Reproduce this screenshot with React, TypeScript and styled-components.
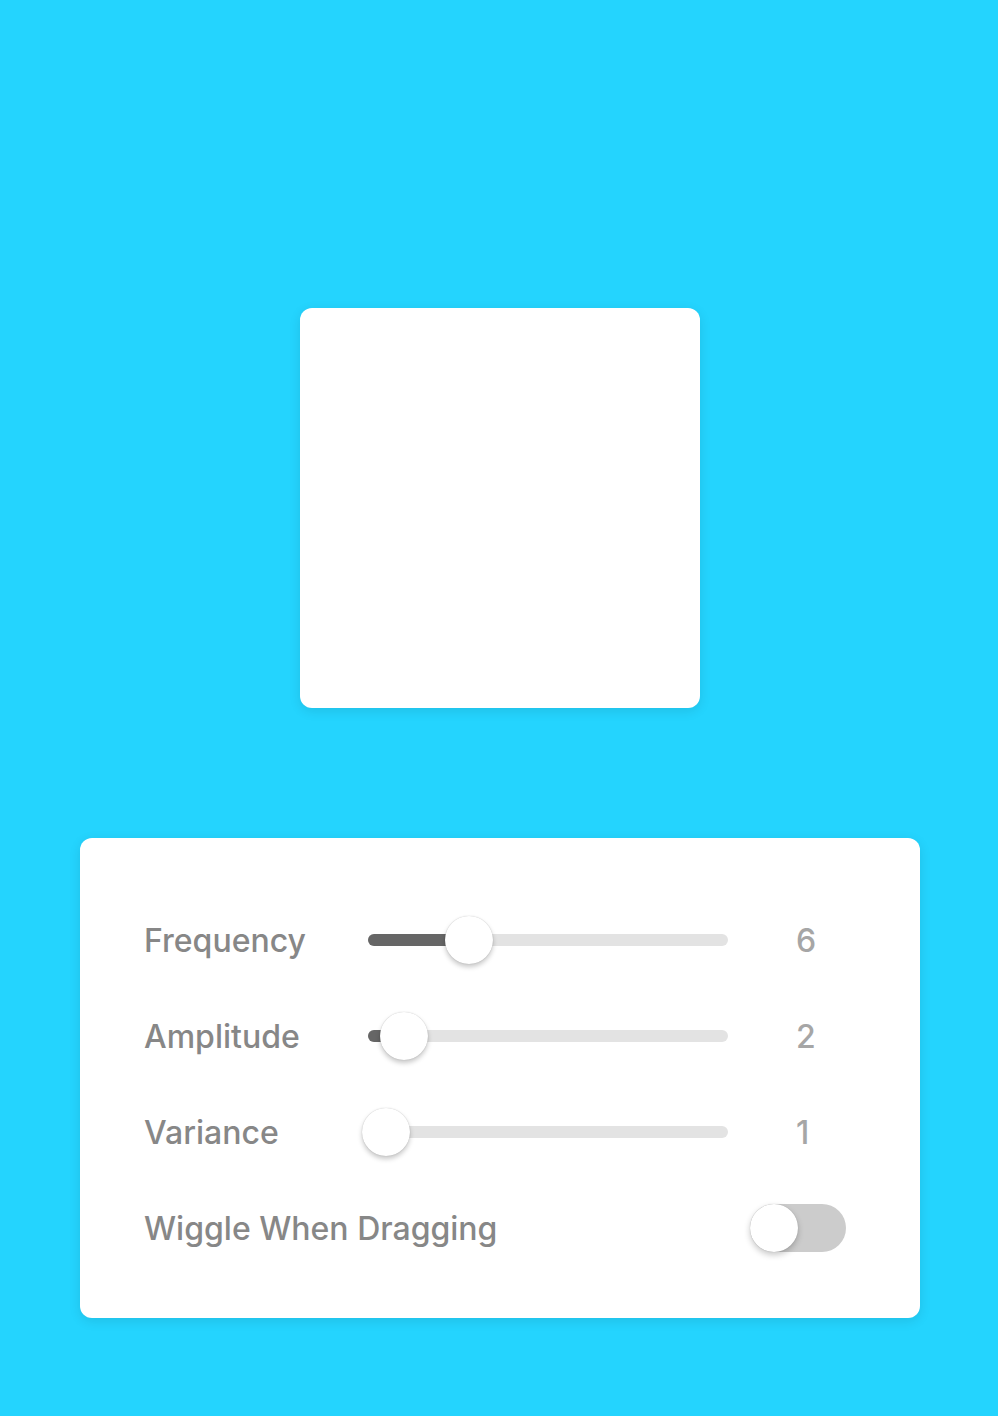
import { Fragment } from "react";
import styled, { createGlobalStyle } from "styled-components";

const GlobalStyle = createGlobalStyle`
  html, body {
    margin: 0;
    padding: 0;
    background: #24d4fe;
  }

  body {
    font-family: Inter, "Liberation Sans", Arial, sans-serif;
  }
`;

const Page = styled.main`
  display: flex;
  flex-direction: column;
  align-items: center;
  gap: 130px;

  min-height: 1416px;
  padding-top: 308px;
  padding-left: 2px;
  box-sizing: border-box;
  background: #24d4fe;
`;

const Square = styled.div`
  width: 400px;
  height: 400px;
  border-radius: 12px;
  background: #ffffff;
  box-shadow: 0 3px 12px rgba(0, 0, 0, 0.1);
`;

const Panel = styled.section`
  display: grid;
  grid-template-columns: 224px 360px 1fr;
  grid-auto-rows: 48px;
  row-gap: 48px;
  align-items: center;

  width: 840px;
  padding: 78px 74px 66px 64px;
  box-sizing: border-box;
  border-radius: 12px;
  background: #ffffff;
  box-shadow: 0 3px 12px rgba(0, 0, 0, 0.1);
`;

const Label = styled.span<{ $wide?: boolean }>`
  grid-column: ${(props) => (props.$wide ? "1 / 3" : "auto")};
  color: #878787;
  font-size: 32px;
  font-weight: 500;
  white-space: nowrap;
`;

const Value = styled.span`
  padding-left: 68px;
  color: #a6a6a6;
  font-size: 32px;
  font-weight: 500;
`;

const Track = styled.div`
  position: relative;
  height: 12px;
  border-radius: 6px;
  background: #e3e3e3;
`;

const Fill = styled.div`
  height: 100%;
  border-radius: 6px;
  background: #666666;
`;

const Thumb = styled.div`
  position: absolute;
  top: 50%;
  width: 48px;
  height: 48px;
  margin-left: -24px;
  border-radius: 50%;
  transform: translateY(-50%);
  background: #ffffff;
  box-shadow: 0 0 1px rgba(0, 0, 0, 0.25), 0 3px 5px rgba(0, 0, 0, 0.22);
`;

const Toggle = styled.div`
  position: relative;
  justify-self: end;
  width: 96px;
  height: 48px;
  border-radius: 24px;
  background: #cccccc;
`;

const Knob = styled.div`
  position: absolute;
  top: 0;
  left: 0;
  width: 48px;
  height: 48px;
  border-radius: 50%;
  background: #ffffff;
  box-shadow: 0 0 1px rgba(0, 0, 0, 0.2), 0 3px 6px rgba(0, 0, 0, 0.22);
`;

const sliders = [
  { name: "Frequency", value: 6, offset: 101 },
  { name: "Amplitude", value: 2, offset: 36 },
  { name: "Variance", value: 1, offset: 18 },
];

const App = () => {
  return (
    <>
      <GlobalStyle />
      <Page>
        <Square />
        <Panel>
          {sliders.map((slider) => (
            <Fragment key={slider.name}>
              <Label>{slider.name}</Label>
              <Track>
                <Fill style={{ width: slider.offset }} />
                <Thumb style={{ left: slider.offset }} />
              </Track>
              <Value>{slider.value}</Value>
            </Fragment>
          ))}
          <Label $wide>Wiggle When Dragging</Label>
          <Toggle>
            <Knob />
          </Toggle>
        </Panel>
      </Page>
    </>
  );
};

export default App;
